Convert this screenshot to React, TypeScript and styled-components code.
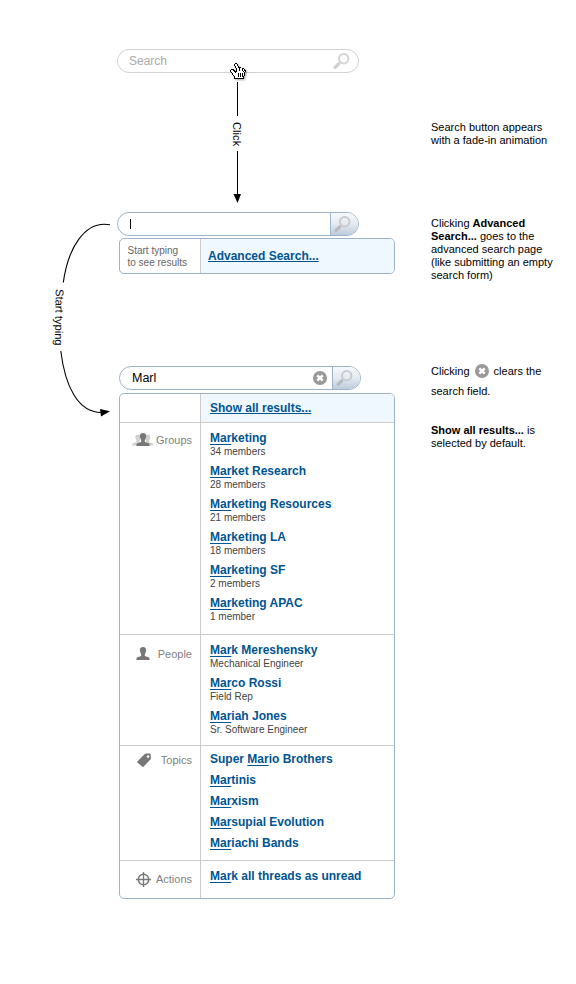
import React from "react";
import styled, { createGlobalStyle } from "styled-components";

const GlobalStyle = createGlobalStyle`
  *, *::before, *::after { box-sizing: border-box; }
  body { margin: 0; background: #fff; }
`;

const Page = styled.main`
  width: 576px;
  height: 984px;
  display: grid;
  grid-template-columns: 117px 278px 130px;
  column-gap: 0;
  overflow: hidden;
  background: #fff;
  color: #000;
  font-family: "Liberation Sans", Arial, sans-serif;
  font-size: 11px;
  line-height: 13px;
`;

const LoopColumn = styled.div`
  padding: 210px 0 0 40px;
`;

const Flow = styled.section`
  display: flex;
  flex-direction: column;
  align-items: flex-start;
  padding-top: 49px;
`;

const Notes = styled.aside`
  display: flex;
  flex-direction: column;
  margin-left: 36px;
  width: 130px;
  padding-top: 121px;
`;

const Note = styled.p<{ $gap?: number; $leading?: number }>`
  margin: ${(p) => p.$gap ?? 0}px 0 0;
  line-height: ${(p) => p.$leading ?? 13}px;
  white-space: nowrap;
`;

const Graphic = styled.svg`
  display: block;
  flex: none;
  overflow: visible;
`;

const InlineIcon = styled(Graphic)`
  display: inline-block;
  vertical-align: middle;
  margin: -2px 5px 0 2px;
`;

const ConnectorText = styled.text`
  font-family: "Liberation Sans", Arial, sans-serif;
  font-size: 11.2px;
  fill: #000;
`;

const Field = styled.div<{ $idle?: boolean; $inset?: number }>`
  position: relative;
  display: flex;
  align-items: stretch;
  width: 242px;
  height: 24px;
  margin-left: ${(p) => p.$inset ?? 0}px;
  border: 1px solid ${(p) => (p.$idle ? "#d2d2d2" : "#9fb3c8")};
  border-radius: 12px;
  overflow: ${(p) => (p.$idle ? "visible" : "hidden")};
  background: #fff;
`;

const FieldValue = styled.span<{ $muted?: boolean }>`
  flex: 1;
  padding-left: ${(p) => (p.$muted ? 11 : 12)}px;
  font-size: ${(p) => (p.$muted ? 12 : 12.5)}px;
  line-height: 23px;
  color: ${(p) => (p.$muted ? "#aaa" : "#000")};
`;

const Caret = styled.i`
  display: inline-block;
  width: 1px;
  height: 10px;
  vertical-align: -1px;
  background: #000;
`;

const FieldIcon = styled.span<{ $right: number }>`
  display: flex;
  align-items: center;
  padding-right: ${(p) => p.$right}px;
`;

const SearchButton = styled.button`
  display: flex;
  align-items: center;
  width: 28px;
  padding: 0 0 0 3px;
  border: 0;
  border-left: 1px solid #9fb3c8;
  background: linear-gradient(#f7f9fb 0%, #e4eaf1 50%, #bccbdc 100%);
`;

const Pointer = styled.svg`
  position: absolute;
  left: 112px;
  top: 13px;
  filter: drop-shadow(1px 1px 1px rgba(0, 0, 0, 0.35));
`;

const Panel = styled.div<{ $top: number; $after?: number }>`
  width: 276px;
  margin: ${(p) => p.$top}px 0 ${(p) => p.$after ?? 0}px 2px;
  border: 1px solid #9fb3c8;
  border-radius: 5px;
  overflow: hidden;
`;

const Row = styled.div<{ $height: number }>`
  display: grid;
  grid-template-columns: 81px 1fr;
  height: ${(p) => p.$height}px;
  & + & { border-top: 1px solid #ccc; }
`;

const Label = styled.div<{ $top: number }>`
  display: flex;
  align-items: flex-start;
  justify-content: space-between;
  padding: ${(p) => p.$top}px 8px 0 12px;
  border-right: 1px solid #ccc;
  color: #808080;
`;

const LabelText = styled.span`
  padding-top: 1px;
`;

const Hint = styled.div`
  padding: 6px 0 0 7.5px;
  border-right: 1px solid #ccc;
  font-size: 10px;
  line-height: 12px;
  color: #666;
  white-space: nowrap;
`;

const Choice = styled.div<{ $left: number }>`
  display: flex;
  align-items: center;
  padding-left: ${(p) => p.$left}px;
  background: #f0f8ff;
`;

const ChoiceLink = styled.a`
  color: #005492;
  font-size: 12px;
  font-weight: bold;
  line-height: 14px;
  text-decoration: underline;
  text-decoration-thickness: 1px;
  text-underline-offset: 1px;
`;

const Results = styled.div<{ $top: number; $gap: number }>`
  display: flex;
  flex-direction: column;
  gap: ${(p) => p.$gap}px;
  padding: ${(p) => p.$top}px 0 0 9px;
`;

const Title = styled.div`
  font-size: 12px;
  font-weight: bold;
  line-height: 14px;
  color: #005492;
  white-space: nowrap;
`;

const Match = styled.span`
  text-decoration: underline;
  text-decoration-thickness: 1px;
  text-underline-offset: 2px;
`;

const Detail = styled.div`
  font-size: 10px;
  line-height: 14px;
  color: #444;
`;

const Magnifier = ({ color, handle }: { color: string; handle: string }) => (
  <Graphic width="17" height="17" viewBox="0 0 17 17" fill="none" stroke={color}>
    <circle cx="10.7" cy="5.8" r="4.7" strokeWidth="2" />
    <path d="M7.4 9.2 6 10.6" strokeWidth="1.6" />
    <path d="M5.6 11 2.1 14.3" stroke={handle} strokeWidth="3.2" strokeLinecap="round" />
  </Graphic>
);

const clearShapes = (
  <>
    <circle cx="7" cy="7" r="7" fill="#999" />
    <path d="M4.300 4.300 9.700 9.700M9.700 4.300 4.300 9.700" stroke="#fff" strokeWidth="2.5" />
  </>
);

// X = outline, o = white fill
const handRows = [
  ".....XX.........",
  "....XooX........",
  "....XooX........",
  ".....XooX.......",
  ".....XooXXX.....",
  "......XooXooXX..",
  ".XXX..XooXooXoX.",
  "XooXX.XooXooXoXX",
  "XoooXXXooooooXoX",
  ".XoooXooooooooX.",
  "..XoooooXoXoXoX.",
  "..XoooooXoXoXoX.",
  "...XooooXoXoXoX.",
  "....XoooXoXoXX..",
  "....XooooooooX..",
  "....XXXXXXXXXX..",
];

const pixelPath = (mark: string) =>
  handRows
    .flatMap((row, y) => [...row].map((c, x) => (c === mark ? `M${x} ${y}h1v1h-1Z` : "")))
    .join("");

const HandPointer = () => (
  <Pointer width="16" height="16" viewBox="0 0 16 16" shapeRendering="crispEdges">
    <path d={pixelPath("o")} fill="#fff" />
    <path d={pixelPath("X")} fill="#000" />
  </Pointer>
);

const personPath =
  "M7 0C4.700 0 3.700 1.300 3.900 3.300c-.2.700.1 1.400.5 1.800.1 1 .4 1.600.8 2.100v1.600C5 9.700 1 9.600.6 11L.3 13h13.400l-.3-2C13 9.600 9 9.700 8.800 8.800V7.200c.4-.5.7-1.100.8-2.100.4-.4.7-1.100.5-1.800C10.300 1.300 9.300 0 7 0Z";

const GroupIcon = () => (
  <Graphic width="22" height="14" viewBox="0 0 22 14">
    <g fill="#d0d0d0">
      <path d={personPath} transform="translate(0 1.4) scale(.86)" />
      <path d={personPath} transform="translate(9.500 1.4) scale(.86)" />
    </g>
    <path d={personPath} fill="#777" transform="translate(4)" />
  </Graphic>
);

const PersonIcon = () => (
  <Graphic width="21" height="14" viewBox="-4 0 21 14">
    <path d={personPath} fill="#777" />
  </Graphic>
);

const TagIcon = () => (
  <Graphic width="22" height="15" viewBox="-5 0 22 15">
    <path
      fillRule="evenodd"
      fill="#777"
      d="M.3 8.4 7.800.9q.5-.5 1.200-.5h3.600q1 0 1.100 1l.2 4q0 .6-.5 1.100L6.500 13.800q-.5.5-1 0L.3 9.400q-.4-.5 0-1Zm10.700-6.200a1.300 1.300 0 1 0 .1 0Z"
    />
  </Graphic>
);

const TargetIcon = () => (
  <Graphic width="22" height="15" viewBox="-4 0 22 15" fill="none" stroke="#777">
    <circle cx="7.5" cy="7.5" r="5.2" strokeWidth="1.5" />
    <path d="M7.5 0v15M0 7.5h15" strokeWidth="1.3" />
  </Graphic>
);

type Entry = { pre?: string; rest: string; detail?: string };
type Section = {
  name: string;
  icon: React.ReactNode;
  height: number;
  labelTop: number;
  top: number;
  gap: number;
  entries: Entry[];
};

const sections: Section[] = [
  {
    name: "Groups",
    icon: <GroupIcon />,
    height: 212,
    labelTop: 10,
    top: 8,
    gap: 5,
    entries: [
      { rest: "keting", detail: "34 members" },
      { rest: "ket Research", detail: "28 members" },
      { rest: "keting Resources", detail: "21 members" },
      { rest: "keting LA", detail: "18 members" },
      { rest: "keting SF", detail: "2 members" },
      { rest: "keting APAC", detail: "1 member" },
    ],
  },
  {
    name: "People",
    icon: <PersonIcon />,
    height: 111,
    labelTop: 12,
    top: 8,
    gap: 5,
    entries: [
      { rest: "k Mereshensky", detail: "Mechanical Engineer" },
      { rest: "co Rossi", detail: "Field Rep" },
      { rest: "iah Jones", detail: "Sr. Software Engineer" },
    ],
  },
  {
    name: "Topics",
    icon: <TagIcon />,
    height: 115,
    labelTop: 7,
    top: 6,
    gap: 7,
    entries: [
      { pre: "Super ", rest: "io Brothers" },
      { rest: "tinis" },
      { rest: "xism" },
      { rest: "supial Evolution" },
      { rest: "iachi Bands" },
    ],
  },
  {
    name: "Actions",
    icon: <TargetIcon />,
    height: 38,
    labelTop: 10.5,
    top: 8,
    gap: 0,
    entries: [{ rest: "k all threads as unread" }],
  },
];

const ResultSection = ({ section }: { section: Section }) => (
  <Row $height={section.height}>
    <Label $top={section.labelTop}>
      {section.icon}
      <LabelText>{section.name}</LabelText>
    </Label>
    <Results $top={section.top} $gap={section.gap}>
      {section.entries.map((e) => (
        <div key={e.rest}>
          <Title>
            {e.pre}
            <Match>Mar</Match>
            {e.rest}
          </Title>
          {e.detail && <Detail>{e.detail}</Detail>}
        </div>
      ))}
    </Results>
  </Row>
);

export default function App() {
  return (
    <>
      <GlobalStyle />
      <Page>
        <LoopColumn>
          <Graphic width="77" height="210" viewBox="0 0 77 210">
            <g fill="none" stroke="#000" strokeWidth="1.100">
              <path d="M70 14.800C45 10 28 38 23.300 72.500" />
              <path d="M20.800 141C25 176 38 203 62 202.500" />
            </g>
            <path d="M60 199 70 201.300 61 206.500Z" />
            <ConnectorText transform="translate(15.800 79) rotate(91)">Start typing</ConnectorText>
          </Graphic>
        </LoopColumn>

        <Flow>
          <Field $idle>
            <FieldValue $muted>Search</FieldValue>
            <FieldIcon $right={8}>
              <Magnifier color="#d4d4d4" handle="#cfcfcf" />
            </FieldIcon>
            <HandPointer />
          </Field>

          <Graphic width="242" height="139" viewBox="0 0 242 139">
            <path d="M120.500 9V43M120.500 78V122" stroke="#000" />
            <path d="M116.500 121h7.500l-3.500 9Z" />
            <ConnectorText transform="translate(116 49) rotate(90)">Click</ConnectorText>
          </Graphic>

          <Field>
            <FieldValue>
              <Caret />
            </FieldValue>
            <SearchButton aria-label="Search">
              <Magnifier color="#c9cbce" handle="#b8babd" />
            </SearchButton>
          </Field>
          <Panel $top={2} $after={92}>
            <Row $height={34}>
              <Hint>
                Start typing
                <br />
                to see results
              </Hint>
              <Choice $left={7}>
                <ChoiceLink>Advanced Search...</ChoiceLink>
              </Choice>
            </Row>
          </Panel>

          <Field $inset={2}>
            <FieldValue>Marl</FieldValue>
            <FieldIcon $right={5}>
              <Graphic width="14" height="14" viewBox="0 0 14 14">
                {clearShapes}
              </Graphic>
            </FieldIcon>
            <SearchButton aria-label="Search">
              <Magnifier color="#c9cbce" handle="#b8babd" />
            </SearchButton>
          </Field>
          <Panel $top={3}>
            <Row $height={28}>
              <Label $top={0} />
              <Choice $left={9}>
                <ChoiceLink>Show all results...</ChoiceLink>
              </Choice>
            </Row>
            {sections.map((s) => (
              <ResultSection key={s.name} section={s} />
            ))}
          </Panel>
        </Flow>

        <Notes>
          <Note>
            Search button appears
            <br />
            with a fade-in animation
          </Note>
          <Note $gap={70}>
            Clicking <b>Advanced</b>
            <br />
            <b>Search...</b> goes to the
            <br />
            advanced search page
            <br />
            (like submitting an empty
            <br />
            search form)
          </Note>
          <Note $gap={79} $leading={20}>
            Clicking{" "}
            <InlineIcon width="14" height="14" viewBox="0 0 14 14">
              {clearShapes}
            </InlineIcon>
            clears the
            <br />
            search field.
          </Note>
          <Note $gap={23}>
            <b>Show all results...</b> is
            <br />
            selected by default.
          </Note>
        </Notes>
      </Page>
    </>
  );
}
